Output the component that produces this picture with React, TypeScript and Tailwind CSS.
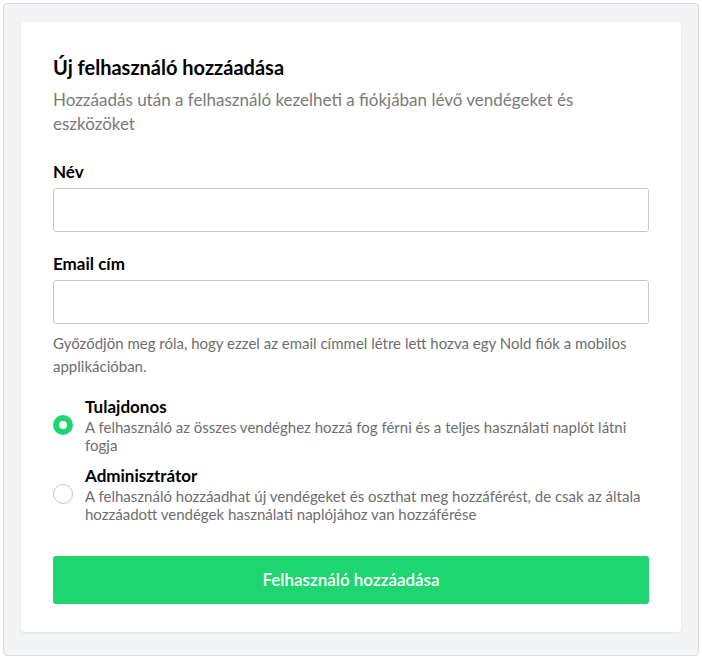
const font = { fontFamily: "Lato, 'Noto Sans', sans-serif" };

const RoleOption = ({
  title,
  desc,
  checked,
}: {
  title: string;
  desc: string;
  checked?: boolean;
}) => (
  <label className="flex items-center gap-[12px]">
    <span
      className={
        checked
          ? "w-[20px] h-[20px] rounded-full border-[6px] border-[#1ed66f] bg-white shrink-0"
          : "w-[20px] h-[20px] rounded-full border border-[#c4c4c4] bg-white shrink-0"
      }
    />
    <span className="flex flex-col">
      <span className="text-[17px] font-bold text-black leading-[22px]">{title}</span>
      <span className="text-[15px] text-[#6e6e6e] leading-[18px]">{desc}</span>
    </span>
  </label>
);

export default function App() {
  return (
    <div className="w-[702px] h-[659px] bg-white p-[3px]" style={font}>
      <div className="h-[653px] bg-[#f3f4f6] border border-[#dcdcdc] rounded-[4px] px-[17px] pt-[18px]">
        <div className="bg-white rounded-[4px] shadow-[0_1px_3px_rgba(0,0,0,0.08)] px-[32px] pt-[33px] pb-[28px]">
          <h1 className="text-[20px] font-bold text-black leading-[24px]">Új felhasználó hozzáadása</h1>
          <p className="mt-[9px] text-[17px] text-[#7a7a7a] leading-[24px]">
            Hozzáadás után a felhasználó kezelheti a fiókjában lévő vendégeket és eszközöket
          </p>

          <div className="mt-[24px] text-[17px] font-bold text-black leading-[24px]">Név</div>
          <input className="mt-[4px] w-full h-[44px] border border-[#c8c8c8] rounded-[3px] px-3 outline-none" />

          <div className="mt-[20px] text-[17px] font-bold text-black leading-[24px]">Email cím</div>
          <input className="mt-[4px] w-full h-[44px] border border-[#c8c8c8] rounded-[3px] px-3 outline-none" />
          <p className="mt-[8px] text-[15px] text-[#6e6e6e] leading-[23px]">
            Győződjön meg róla, hogy ezzel az email címmel létre lett hozva egy Nold fiók a mobilos applikációban.
          </p>

          <div className="mt-[18px] flex flex-col gap-[11px]">
            <RoleOption
              checked
              title="Tulajdonos"
              desc="A felhasználó az összes vendéghez hozzá fog férni és a teljes használati naplót látni fogja"
            />
            <RoleOption
              title="Adminisztrátor"
              desc="A felhasználó hozzáadhat új vendégeket és oszthat meg hozzáférést, de csak az általa hozzáadott vendégek használati naplójához van hozzáférése"
            />
          </div>

          <button className="mt-[33px] w-full h-[48px] rounded-[3px] bg-[#1ed66f] text-white text-[17px] font-semibold">
            Felhasználó hozzáadása
          </button>
        </div>
      </div>
    </div>
  );
}
